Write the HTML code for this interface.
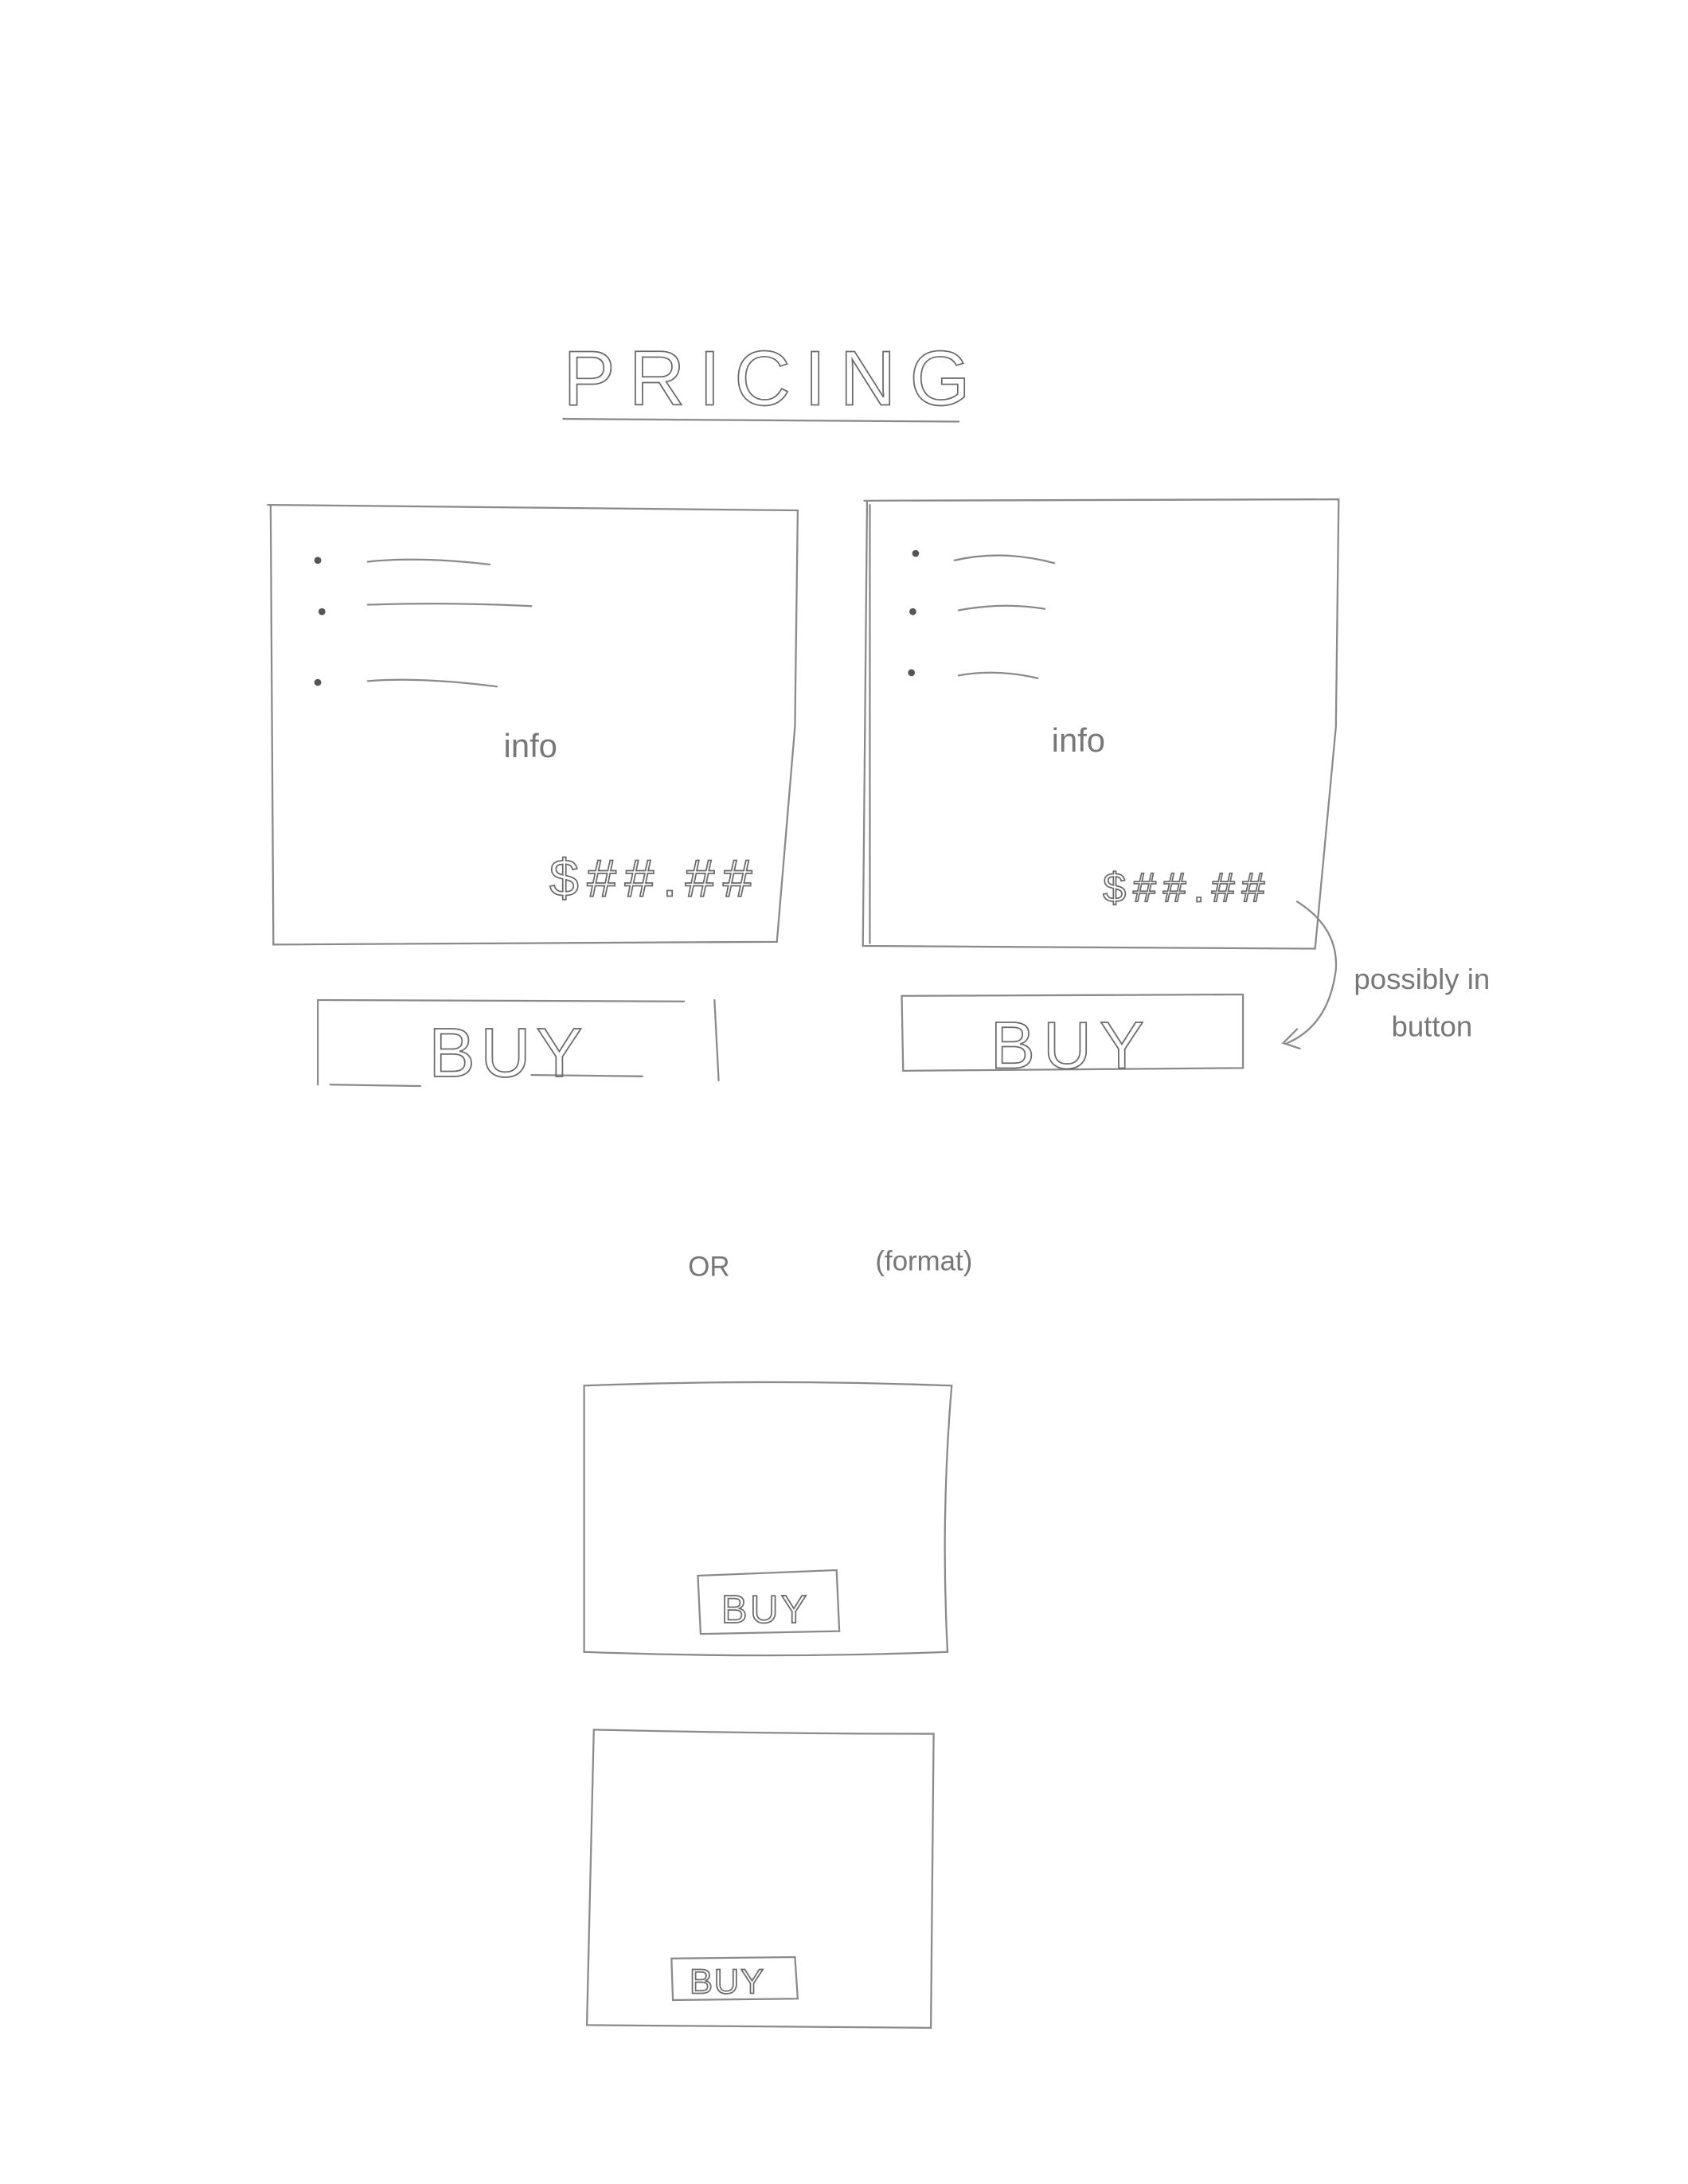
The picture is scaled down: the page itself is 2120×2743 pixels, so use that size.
<!DOCTYPE html>
<html>
<head>
<meta charset="utf-8">
<style>
html,body{margin:0;padding:0;background:#fff;}
svg{display:block;}
text{font-family:"Liberation Sans",sans-serif;fill:none;stroke:#6a6a6a;stroke-width:1;}
.t{fill:#777;stroke:none;}
</style>
</head>
<body>
<svg width="2120" height="2743" viewBox="0 0 1224 1584" xmlns="http://www.w3.org/2000/svg">
<rect width="1224" height="1584" fill="#fff"/>
<g transform="translate(3,4) scale(1.006)">
<g fill="none" stroke="#8a8a8a" stroke-width="1.3" stroke-linecap="round">
<line x1="403" y1="298" x2="688" y2="300"/>
<path d="M190 360 L572 364 L570 520 L557 675 L194 677 L192 360"/>
<path d="M262 401 Q300 397 350 403"/>
<path d="M262 432 Q320 430 380 433"/>
<path d="M262 487 Q300 484 355 491"/>
<path d="M620 357 L962 356 L960 520 L945 680 L619 678 L622 357"/>
<path d="M624 360 L624 676"/>
<path d="M685 400 Q720 392 757 402"/>
<path d="M688 436 Q720 430 750 435"/>
<path d="M688 483 Q715 478 745 485"/>
<path d="M226 717 L490 718"/>
<path d="M226 717 L226 778"/>
<path d="M235 778 L300 779 M380 771 L460 772"/>
<path d="M512 717 L515 775"/>
<path d="M647 714 L893 713 L893 766 L648 768 Z"/>
<path d="M932 646 Q962 665 960 695 Q955 735 925 748"/>
<path d="M932 738 L922 748 L934 752"/>
<path d="M418 995 Q550 990 683 995 Q675 1090 680 1187 Q550 1192 418 1187 L418 995"/>
<path d="M500 1132 L600 1128 L602 1172 L502 1174 Z"/>
<path d="M425 1243 Q550 1246 670 1246 L668 1458 L420 1456 L425 1243"/>
<path d="M481 1408 L570 1407 L572 1437 L482 1438 Z"/>
</g>
<g fill="#555">
<circle cx="226" cy="400" r="2.5"/><circle cx="229" cy="437" r="2.5"/><circle cx="226" cy="488" r="2.5"/>
<circle cx="657" cy="395" r="2.5"/><circle cx="655" cy="437" r="2.5"/><circle cx="654" cy="481" r="2.5"/>
</g>
<text x="403" y="288" font-size="56" letter-spacing="10">PRICING</text>
<text class="t" x="360" y="542" font-size="24">info</text>
<text class="t" x="755" y="538" font-size="24">info</text>
<text x="393" y="642" font-size="38" letter-spacing="6">$##.##</text>
<text x="792" y="646" font-size="30" letter-spacing="5">$##.##</text>
<text x="306" y="772" font-size="50" letter-spacing="4">BUY</text>
<text x="711" y="766" font-size="48" letter-spacing="6">BUY</text>
<text class="t" x="973" y="709" font-size="21">possibly in</text>
<text class="t" x="1000" y="743" font-size="21">button</text>
<text class="t" x="493" y="916" font-size="20">OR</text>
<text class="t" x="628" y="912" font-size="20">(format)</text>
<text x="517" y="1166" font-size="28" letter-spacing="2">BUY</text>
<text x="494" y="1433" font-size="25" letter-spacing="1">BUY</text>
</g>
</svg>
</body>
</html>
